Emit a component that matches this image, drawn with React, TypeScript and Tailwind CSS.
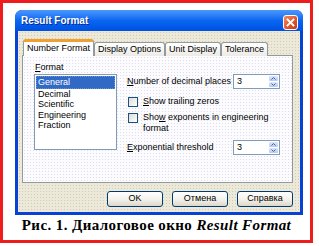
const ui = "font-['Liberation_Sans',Arial,sans-serif]";

function Spin({ value }: { value: string }) {
  return (
    <div className="flex h-[15px] w-[47px] border border-[#7f9db9] bg-white">
      <div className="flex-1 pl-[3px] text-[9px] leading-[13px] text-black">{value}</div>
      <div className="flex w-[11px] flex-col gap-px p-px">
        <div className="flex flex-1 items-center justify-center rounded-[1px] bg-gradient-to-b from-[#dce6fd] to-[#b6cbf8]">
          <svg width="5" height="3" viewBox="0 0 5 3">
            <path d="M0.5 2.5 L2.5 0.5 L4.5 2.5" fill="none" stroke="#4d6185" strokeWidth="1" />
          </svg>
        </div>
        <div className="flex flex-1 items-center justify-center rounded-[1px] bg-gradient-to-b from-[#dce6fd] to-[#b6cbf8]">
          <svg width="5" height="3" viewBox="0 0 5 3">
            <path d="M0.5 0.5 L2.5 2.5 L4.5 0.5" fill="none" stroke="#4d6185" strokeWidth="1" />
          </svg>
        </div>
      </div>
    </div>
  );
}

function Check() {
  return (
    <div className="mt-[1px] h-[10px] w-[10px] shrink-0 border border-[#1c5180] bg-gradient-to-br from-[#dcdcd7] to-white" />
  );
}

function Button({ label }: { label: string }) {
  return (
    <div className="flex h-[16px] w-[56px] items-center justify-center rounded-[3px] border border-[#003c74] bg-gradient-to-b from-white via-[#f4f3ee] to-[#dcd8c8] text-[9px] text-black">
      {label}
    </div>
  );
}

export default function App() {
  const tabs = ["Display Options", "Unit Display", "Tolerance"];
  const items = ["Decimal", "Scientific", "Engineering", "Fraction"];

  return (
    <div className={`h-[246px] w-[319px] bg-white ${ui}`}>
      <div className="flex h-[243px] w-[313px] flex-col border-[3px] border-[#ee1c1c] pl-[12px] pt-[7px]">
        {/* window */}
        <div className="flex h-[205px] w-[288px] flex-col rounded-t-[7px] bg-[#0842d4]">
          <div className="flex h-[21px] items-center justify-between rounded-t-[7px] bg-gradient-to-b from-[#4a98fc] via-[#0a66f0] to-[#0050e4] pl-[6px] pr-[5px]">
            <span className="text-[10px] font-bold text-white [text-shadow:1px_1px_0_#0a2a90]">Result Format</span>
            <div className="mt-[3px] flex h-[15px] w-[15px] items-center justify-center rounded-[3px] border border-white bg-gradient-to-br from-[#f08a64] via-[#e15a32] to-[#c23a14]">
              <svg width="9" height="9" viewBox="0 0 9 9">
                <path d="M1.5 1.5 L7.5 7.5 M7.5 1.5 L1.5 7.5" stroke="white" strokeWidth="1.8" strokeLinecap="square" />
              </svg>
            </div>
          </div>

          <div className="mx-[3px] mb-[3px] flex flex-1 flex-col bg-[#ece9d8] bg-[radial-gradient(circle,#cfcbb8_0.6px,transparent_0.9px)] bg-[length:3px_3px] pl-[4px] pt-[8px]">
            {/* tabs */}
            <div className="relative z-10 -mb-px flex items-end pl-[1px] text-[9px] text-black">
              <div className="h-[17px] rounded-t-[3px] border-x border-t-[3px] border-x-[#919b9c] border-t-[#f0a030] bg-white px-[3px] leading-[12px]">
                Number Format
              </div>
              {tabs.map((t) => (
                <div
                  key={t}
                  className="h-[14px] rounded-t-[3px] border border-b-0 border-[#919b9c] bg-gradient-to-b from-white to-[#ecebe5] px-[3px] leading-[13px]"
                >
                  {t}
                </div>
              ))}
            </div>

            {/* panel */}
            <div className="flex h-[128px] w-[271px] gap-[10px] border border-[#919b9c] bg-[#fcfcfe] bg-[radial-gradient(circle,#dcdcee_0.6px,transparent_0.9px)] bg-[length:3px_3px] pl-[11px] pt-[6px] text-[9px] text-black">
              <div className="flex w-[83px] flex-col">
                <div className="h-[11px] pl-px leading-[11px]">
                  <span className="underline">F</span>ormat
                </div>
                <div className="mt-px h-[76px] border border-[#7f9db9] bg-white p-px leading-[10.6px]">
                  <div className="border border-dotted border-[#6d8fd0] bg-[#316ac5] pl-[1px] text-white">General</div>
                  {items.map((i) => (
                    <div key={i} className="pl-[2px]">
                      {i}
                    </div>
                  ))}
                </div>
              </div>

              <div className="flex flex-col pt-[12px]">
                <div className="flex h-[15px] items-center">
                  <span className="w-[106px]">
                    <span className="underline">N</span>umber of decimal places
                  </span>
                  <Spin value="3" />
                </div>
                <div className="mt-[7px] flex gap-[5px] pl-px leading-[11px]">
                  <Check />
                  <span>
                    <span className="underline">S</span>how trailing zeros
                  </span>
                </div>
                <div className="mt-[5px] flex gap-[5px] pl-px leading-[11px]">
                  <Check />
                  <span>
                    Sho<span className="underline">w</span> exponents in engineering
                    <br />
                    format
                  </span>
                </div>
                <div className="mt-[6px] flex h-[15px] items-center">
                  <span className="w-[106px]">
                    <span className="underline">E</span>xponential threshold
                  </span>
                  <Spin value="3" />
                </div>
              </div>
            </div>

            {/* buttons */}
            <div className="mt-[8px] flex justify-end gap-[9px] pr-[7px]">
              <Button label="OK" />
              <Button label="Отмена" />
              <Button label="Справка" />
            </div>
          </div>
        </div>

        {/* caption */}
        <p className="-ml-[12px] mt-[2px] text-center font-['Liberation_Serif','Times_New_Roman',serif] text-[15px] font-bold leading-[16px] tracking-[0.4px] text-black">
          Рис. 1. Диалоговое окно <i>Result Format</i>
        </p>
      </div>
    </div>
  );
}
